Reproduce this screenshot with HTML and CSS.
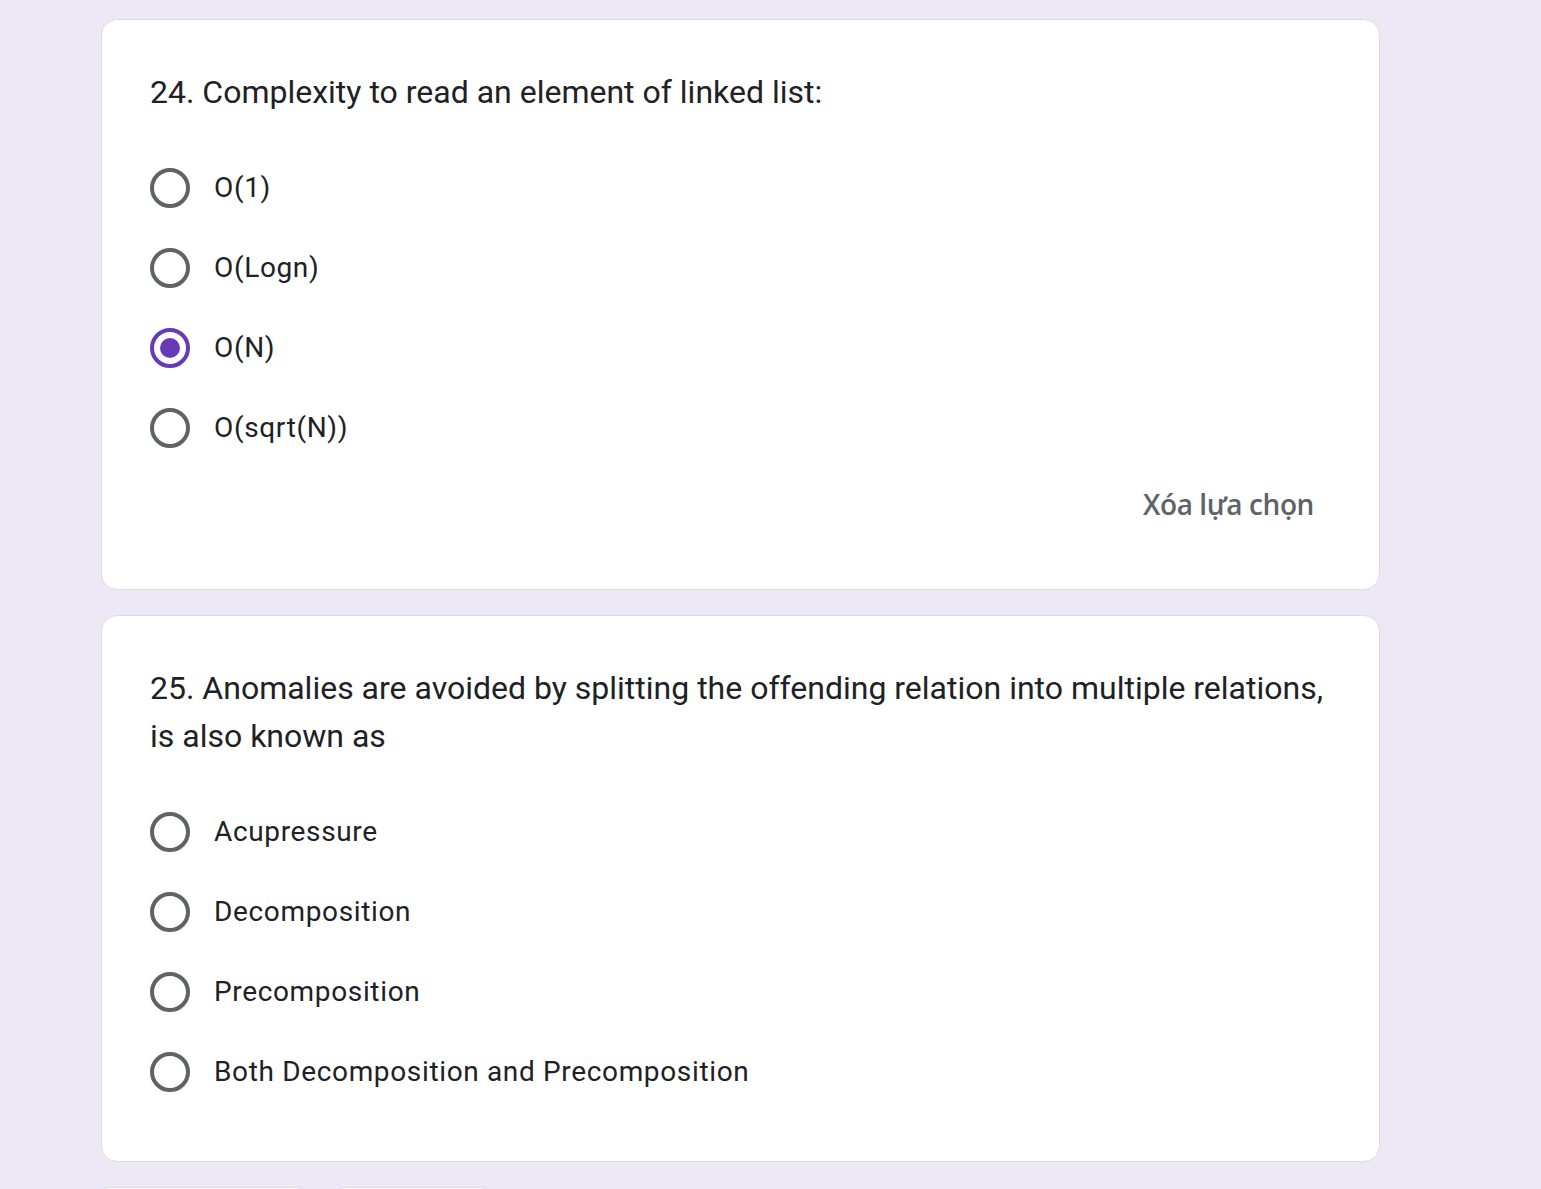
FILE: index.html
```html
<!DOCTYPE html>
<html lang="vi">
<head>
<meta charset="utf-8">
<title>Form</title>
<link rel="stylesheet" href="styles.css">
</head>
<body>
<main class="page">
  <section class="card">
    <div class="title">24. Complexity to read an element of linked list:</div>
    <div class="options">
      <label class="option"><span class="radio"></span><span class="label">O(1)</span></label>
      <label class="option"><span class="radio"></span><span class="label">O(Logn)</span></label>
      <label class="option"><span class="radio checked"></span><span class="label">O(N)</span></label>
      <label class="option"><span class="radio"></span><span class="label">O(sqrt(N))</span></label>
    </div>
    <div class="clear-row"><button class="clear">Xóa lựa chọn</button></div>
  </section>
  <section class="card">
    <div class="title">25. Anomalies are avoided by splitting the offending relation into multiple relations, is also known as</div>
    <div class="options">
      <label class="option"><span class="radio"></span><span class="label">Acupressure</span></label>
      <label class="option"><span class="radio"></span><span class="label">Decomposition</span></label>
      <label class="option"><span class="radio"></span><span class="label">Precomposition</span></label>
      <label class="option"><span class="radio"></span><span class="label">Both Decomposition and Precomposition</span></label>
    </div>
  </section>
  <div class="nav">
    <div class="navbtn back"></div>
    <div class="navbtn next"></div>
  </div>
</main>
</body>
</html>
```
FILE: styles.css
```css
html, body {
  margin: 0;
  padding: 0;
  background: #ede7f6;
  font-family: Roboto, "Liberation Sans", sans-serif;
  color: #202124;
  overflow: hidden;
}
.page {
  width: 1279px;
  margin-left: 101px;
  padding-top: 19px;
  display: flex;
  flex-direction: column;
  gap: 25px;
}
.card {
  background: #fff;
  border: 1px solid #dadce0;
  border-radius: 16px;
  padding: 48px 48px 49px;
  display: flex;
  flex-direction: column;
}
.title {
  font-size: 32px;
  line-height: 48px;
  letter-spacing: 0;
}
.options {
  margin-top: 32px;
  display: flex;
  flex-direction: column;
}
.option {
  height: 80px;
  display: flex;
  align-items: center;
}
.radio {
  box-sizing: border-box;
  width: 40px;
  height: 40px;
  border: 4px solid #5f6368;
  border-radius: 50%;
  flex: none;
  display: flex;
  align-items: center;
  justify-content: center;
}
.radio.checked {
  border-color: #673ab7;
}
.radio.checked::after {
  content: "";
  width: 20px;
  height: 20px;
  border-radius: 50%;
  background: #673ab7;
}
.label {
  margin-left: 24px;
  font-size: 28px;
  letter-spacing: 0.65px;
  line-height: 40px;
}
.clear-row {
  display: flex;
  justify-content: flex-end;
  margin-right: 1px;
}
.clear {
  height: 72px;
  padding: 0 16px;
  border: none;
  background: transparent;
  font-family: "Open Sans", Roboto, sans-serif;
  font-weight: 600;
  font-size: 28px;
  letter-spacing: -0.4px;
  color: #5f6368;
}
.nav {
  display: flex;
  gap: 31px;
  height: 72px;
}
.navbtn {
  background: #fff;
  border: 1px solid #dadce0;
  border-radius: 8px;
  height: 72px;
}
.back { width: 202px; }
.next { width: 151px; }
```
